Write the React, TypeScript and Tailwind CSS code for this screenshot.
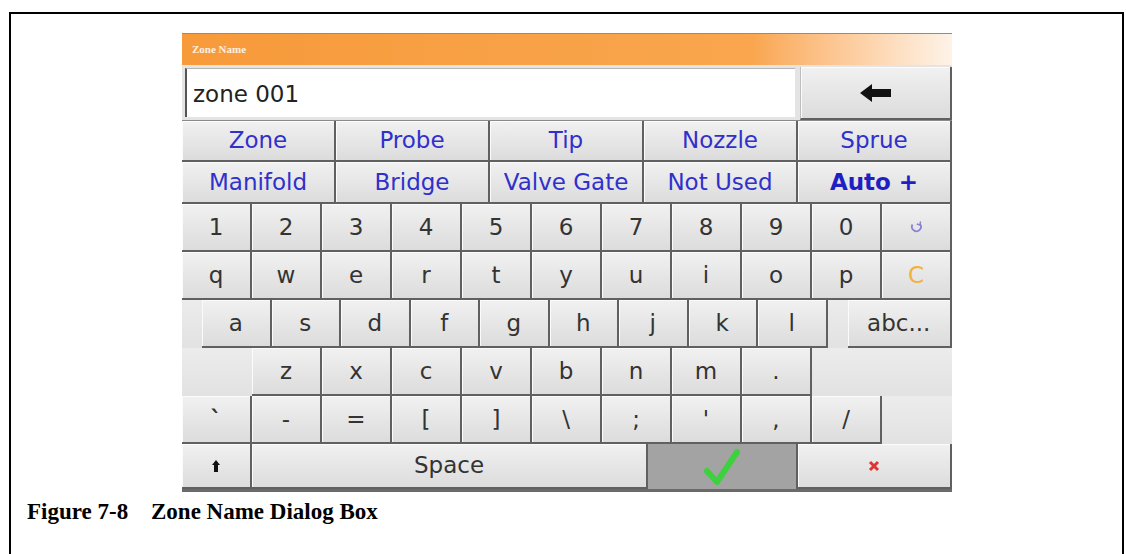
import type { ReactNode } from 'react';

const ui = "font-['DejaVu_Sans',sans-serif]";

// one key of the on-screen keyboard
function Key({
  children,
  className = '',
}: {
  children?: ReactNode;
  className?: string;
}) {
  return (
    <div
      className={`flex items-center justify-center border-r-2 border-b-2 border-[#606060] bg-linear-to-b from-[#f1f1f1] to-[#dcdcdc] shadow-[inset_1px_1px_0_#fbfbfb] ${className}`}
    >
      {children}
    </div>
  );
}

function Blank({ className = '' }: { className?: string }) {
  return <div className={`bg-linear-to-b from-[#ececec] to-[#e2e2e2] ${className}`} />;
}

const phrases1 = ['Zone', 'Probe', 'Tip', 'Nozzle', 'Sprue'];
const phrases2 = ['Manifold', 'Bridge', 'Valve Gate', 'Not Used'];
const digits = ['1', '2', '3', '4', '5', '6', '7', '8', '9', '0'];
const qrow = ['q', 'w', 'e', 'r', 't', 'y', 'u', 'i', 'o', 'p'];
const arow = ['a', 's', 'd', 'f', 'g', 'h', 'j', 'k', 'l'];
const zrow = ['z', 'x', 'c', 'v', 'b', 'n', 'm', '.'];
const symrow = ['-', '=', '[', ']', '\\', ';', "'", ',', '/'];

export default function App() {
  return (
    <div className="h-[554px] overflow-hidden bg-white pt-3 pl-[9px]">
      <div className="h-[600px] w-[1115px] border-2 border-b-0 border-black">
        <div className={`ml-[171px] mt-[19px] w-[770px] bg-[#e4e4e4] ${ui}`}>
          {/* title bar */}
          <div className="flex h-[32px] items-center border-t border-[#b9834a] bg-linear-to-r from-[#f79a3a] via-[#f9a64e] via-[74%] to-[#fdf3e8] pl-[10px]">
            <span className="font-['Liberation_Serif',serif] text-[11px] font-bold text-[#fff1e0]">
              Zone Name
            </span>
          </div>

          {/* input + backspace */}
          <div className="flex h-[55px]">
            <div className="my-[3px] ml-[3px] mr-[5px] flex flex-1 items-center border-t border-l-2 border-t-[#b5b5b5] border-l-[#555] bg-white pl-[6px] pt-[2px] text-[23px] text-[#222]">
              zone 001
            </div>
            <Key className="mt-[2px] w-[152px] border-l border-l-[#bdbdbd]">
              <svg width="34" height="20" viewBox="0 0 34 20">
                <path d="M1 10 L13 1 L13 6 L32 6 L32 14 L13 14 L13 19 Z" fill="#111" />
              </svg>
            </Key>
          </div>

          {/* phrase rows */}
          <div className="flex h-[42px] border-t border-[#8a8a8a]">
            {phrases1.map((p) => (
              <Key key={p} className="flex-1 text-[23px] text-[#3030cc]">
                {p}
              </Key>
            ))}
          </div>
          <div className="flex h-[42px]">
            {phrases2.map((p) => (
              <Key key={p} className="flex-1 text-[23px] text-[#3030cc]">
                {p}
              </Key>
            ))}
            <Key className="flex-1 text-[23px] font-bold text-[#1f1fc4]">Auto +</Key>
          </div>

          {/* digits */}
          <div className="flex h-[48px] text-[23px] text-[#333]">
            {digits.map((d) => (
              <Key key={d} className="flex-1">
                {d}
              </Key>
            ))}
            <Key className="flex-1">
              <svg width="14" height="14" viewBox="0 0 14 14">
                <path
                  d="M3.5 4.5 A4.5 4.5 0 1 0 11 4"
                  fill="none"
                  stroke="#8a80d6"
                  strokeWidth="1.8"
                />
                <path d="M11.5 1.5 L11 5 L7.8 4" fill="none" stroke="#8a80d6" strokeWidth="1.5" />
              </svg>
            </Key>
          </div>

          {/* qwerty */}
          <div className="flex h-[48px] text-[23px] text-[#333]">
            {qrow.map((d) => (
              <Key key={d} className="flex-1">
                {d}
              </Key>
            ))}
            <Key className="flex-1 text-[#f2b236]">C</Key>
          </div>

          {/* asdf */}
          <div className="flex h-[48px] text-[23px] text-[#333]">
            <Blank className="w-[20px]" />
            {arow.map((d) => (
              <Key key={d} className="w-[69.5px]">
                {d}
              </Key>
            ))}
            <Blank className="w-[20px]" />
            <Key className="flex-1">abc...</Key>
          </div>

          {/* zxcv */}
          <div className="flex h-[48px] text-[23px] text-[#333]">
            <Blank className="w-[70px]" />
            {zrow.map((d) => (
              <Key key={d} className="w-[70px]">
                {d}
              </Key>
            ))}
            <Blank className="flex-1" />
          </div>

          {/* symbols */}
          <div className="flex h-[48px] text-[23px] text-[#333]">
            <Key className="w-[70px] font-bold">`</Key>
            {symrow.map((d) => (
              <Key key={d} className="w-[70px]">
                {d}
              </Key>
            ))}
            <Blank className="flex-1" />
          </div>

          {/* bottom row */}
          <div className="flex h-[48px] border-b-[3px] border-[#6a6a6a] text-[23px] text-[#333]">
            <Key className="w-[70px] border-b-0">
              <svg width="8" height="12" viewBox="0 0 8 12">
                <path d="M4 0 L8 5 L6 5 L6 12 L2 12 L2 5 L0 5 Z" fill="#111" />
              </svg>
            </Key>
            <Key className="w-[396px] border-b-0">Space</Key>
            <div className="flex w-[150px] items-center justify-center border-r-2 border-[#606060] bg-[#a3a3a3]">
              <svg width="40" height="40" viewBox="0 0 40 40">
                <path
                  d="M5 24 L15 35 L35 5"
                  fill="none"
                  stroke="#3fd03f"
                  strokeWidth="6"
                  strokeLinecap="round"
                  strokeLinejoin="round"
                />
              </svg>
            </div>
            <Key className="flex-1 border-b-0">
              <svg width="12" height="12" viewBox="0 0 12 12">
                <path d="M2 2 L10 10 M10 2 L2 10" stroke="#e03434" strokeWidth="3" />
              </svg>
            </Key>
          </div>
        </div>

        {/* caption */}
        <div className="mt-[8px] flex pl-[16px] font-['Liberation_Serif',serif] text-[23px] font-bold leading-[24px] text-black">
          <span className="w-[124px]">Figure 7-8</span>
          <span>Zone Name Dialog Box</span>
        </div>
      </div>
    </div>
  );
}
